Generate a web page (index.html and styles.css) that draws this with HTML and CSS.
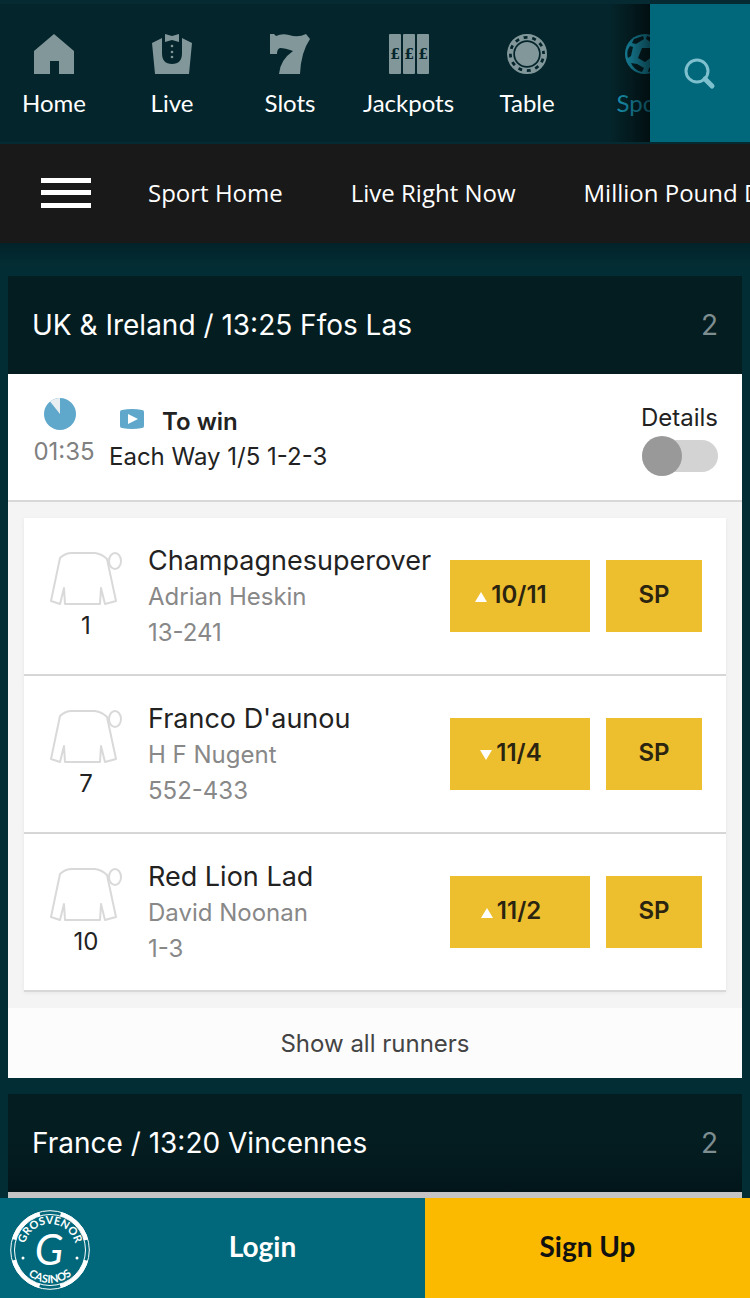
FILE: index.html
```
<!DOCTYPE html>
<html lang="en">

<head>
    <meta charset="UTF-8">
    <meta name="viewport" content="width=device-width, initial-scale=1.0">
    <title>Grosvenor Casinos - Sport</title>
    <link rel="stylesheet" href="styles.css">
</head>

<body>
    <header class="top">
        <nav class="products">
            <a href="#">
                <svg width="40" height="40" viewBox="0 0 40 40"><path d="M20 0L40 17V40H25V27H16V40H0V17Z"/></svg>
                Home
            </a>
            <a href="#">
                <svg width="40" height="40" viewBox="0 0 40 40">
                    <path d="M0 9L10 4V19Q10 30 20 30Q30 30 30 19V4L40 9L37 40H3Z"/>
                    <path d="M13 0L20 2L27 0V8L20 6L13 8Z"/>
                    <circle cx="20" cy="12" r="1.3"/><circle cx="20" cy="18" r="1.3"/><circle cx="20" cy="23" r="1.3"/>
                </svg>
                Live
            </a>
            <a href="#">
                <svg width="40" height="40" viewBox="0 0 40 40"><path d="M0 0H4L6 2Q12-1 19 1Q28 4 36 0L40 5Q31 18 30 40H9Q10 26 23 17Q15 14 10 14Q7 15 7 20H0Z"/></svg>
                Slots
            </a>
            <a href="#">
                <svg width="40" height="40" viewBox="0 0 40 40">
                    <rect width="12" height="40" rx="1"/><rect x="14" width="12" height="40" rx="1"/><rect x="28" width="12" height="40" rx="1"/>
                    <g class="pound"><text x="6" y="25">£</text><text x="20" y="25">£</text><text x="34" y="25">£</text></g>
                </svg>
                Jackpots
            </a>
            <a href="#">
                <svg width="40" height="40" viewBox="0 0 40 40">
                    <circle cx="20" cy="20" r="12"/>
                    <g fill="none" stroke="currentColor">
                        <circle cx="20" cy="20" r="19" stroke-width="2"/>
                        <circle cx="20" cy="20" r="14.5" stroke-width="1.5"/>
                        <circle cx="20" cy="20" r="17" stroke-width="5" stroke-dasharray="4.9 4"/>
                    </g>
                </svg>
                Table
            </a>
            <a href="#" class="current">
                <svg width="40" height="40" viewBox="0 0 40 40">
                    <circle cx="20" cy="20" r="20"/>
                    <path class="hole" d="M17 14L25 14L28 22L20 28L13 24ZM9 5L18 2L19 5L11 10L7 9ZM22 2L31 5L33 9L29 10L21 5ZM5 12L8 13L6 22L3 24Q1 17 5 12ZM6 29L12 30L19 34L17 38Q9 36 6 29ZM24 34L32 29L35 29Q31 37 23 38ZM35 12Q39 18 37 25L34 22L33 13Z"/>
                </svg>
                Sport
            </a>
        </nav>
        <button class="search" aria-label="Search">
            <svg width="32" height="32" viewBox="0 0 32 32" fill="none" stroke="#7fc0cf">
                <circle cx="13" cy="13" r="11" stroke-width="3"/>
                <path d="M21 21L28 28" stroke-width="5" stroke-linecap="round"/>
            </svg>
        </button>
    </header>

    <nav class="subnav">
        <button class="burger" aria-label="Menu"><span></span><span></span><span></span></button>
        <a href="#">Sport Home</a>
        <a href="#">Live Right Now</a>
        <a href="#">Million Pound Drop</a>
    </nav>

    <main>
        <section class="event">
            <h2>UK &amp; Ireland / 13:25 Ffos Las <span>2</span></h2>
            <div class="market">
                <div class="countdown">
                    <svg width="32" height="32" viewBox="0 0 32 32">
                        <circle cx="16" cy="16" r="16" fill="#5fa8cb"/>
                        <path d="M16 16V0A16 16 0 0 0 6 3.5Z" fill="#e9eef0"/>
                    </svg>
                    <span>01:35</span>
                </div>
                <div class="terms">
                    <strong>
                        <svg width="24" height="20" viewBox="0 0 24 20">
                            <path d="M2 1Q12-1 22 1Q24 1 24 3V17Q24 19 22 19Q12 21 2 19Q0 19 0 17V3Q0 1 2 1Z" fill="#5fa8cb"/>
                            <path d="M8 5L18 10L8 15Z" fill="#fff"/>
                        </svg>
                        To win
                    </strong>
                    <span>Each Way 1/5 1-2-3</span>
                </div>
                <label class="details" for="details">Details
                    <input type="checkbox" id="details">
                </label>
            </div>
            <div class="runners">
                <div class="runner">
                    <div class="silk">
                        <svg width="72" height="54" viewBox="0 0 72 54"><use href="#silk"/></svg>
                        <span>1</span>
                    </div>
                    <div class="info">
                        <h3>Champagnesuperover</h3>
                        <p>Adrian Heskin</p>
                        <p>13-241</p>
                    </div>
                    <button class="odds"><i class="up"></i>10/11</button>
                    <button class="sp">SP</button>
                </div>
                <div class="runner">
                    <div class="silk">
                        <svg width="72" height="54" viewBox="0 0 72 54"><use href="#silk"/></svg>
                        <span>7</span>
                    </div>
                    <div class="info">
                        <h3>Franco D'aunou</h3>
                        <p>H F Nugent</p>
                        <p>552-433</p>
                    </div>
                    <button class="odds"><i class="down"></i>11/4</button>
                    <button class="sp">SP</button>
                </div>
                <div class="runner">
                    <div class="silk">
                        <svg width="72" height="54" viewBox="0 0 72 54"><use href="#silk"/></svg>
                        <span>10</span>
                    </div>
                    <div class="info">
                        <h3>Red Lion Lad</h3>
                        <p>David Noonan</p>
                        <p>1-3</p>
                    </div>
                    <button class="odds"><i class="up"></i>11/2</button>
                    <button class="sp">SP</button>
                </div>
            </div>
            <button class="show-all">Show all runners</button>
        </section>

        <section class="event next">
            <h2>France / 13:20 Vincennes <span>2</span></h2>
        </section>
    </main>

    <footer class="account">
        <a href="#" class="logo" aria-label="Grosvenor Casinos">
            <svg width="80" height="80" viewBox="0 0 80 80">
                <circle cx="40" cy="40" r="39.3" fill="none" stroke="#fff"/>
                <circle cx="40" cy="40" r="35.5" fill="none" stroke="#fff"/>
                <circle cx="40" cy="40" r="37.5" fill="none" stroke="#fff" stroke-width="4" stroke-dasharray="37.9 21" stroke-dashoffset="-10.500"/>
                <path id="arcTop" d="M14 40A26 26 0 0 1 66 40" fill="none"/>
                <path id="arcBottom" d="M7 40A33 33 0 0 0 73 40" fill="none"/>
                <text class="ring"><textPath href="#arcTop" startOffset="50%">GROSVENOR</textPath></text>
                <text class="ring"><textPath href="#arcBottom" startOffset="50%">CASINOS</textPath></text>
                <circle cx="13" cy="48" r="1.5" fill="#fff"/><circle cx="67" cy="48" r="1.5" fill="#fff"/>
                <text class="mark" x="39" y="55">G</text>
            </svg>
        </a>
        <button class="login">Login</button>
        <button class="signup">Sign Up</button>
    </footer>

    <!-- jockey silk, shared by every runner -->
    <svg width="0" height="0" class="defs">
        <defs>
            <g id="silk" fill="none" stroke="#d9d9d9" stroke-width="2" stroke-linejoin="round">
                <path d="M10 6Q15 1 22 1H45Q52 2 57 7L66 49L55 52L51 36L50 52H15L14 36L10 52L1 49Z"/>
                <ellipse cx="65" cy="9" rx="6" ry="8"/>
            </g>
        </defs>
    </svg>
</body>

</html>
```

FILE: styles.css
```
* {
    box-sizing: border-box;
}

body {
    margin: 0;
    min-height: 100vh;
    display: flex;
    flex-direction: column;
    background: #032d34;
    font-family: Inter, "Open Sans", sans-serif;
    font-size: 24px;
    color: #222;
}

a {
    color: inherit;
    text-decoration: none;
}

button {
    border: none;
    padding: 0;
    font: inherit;
    color: inherit;
    cursor: pointer;
}

h2,
h3,
p {
    margin: 0;
    font-weight: 400;
}

.defs {
    position: absolute;
}

/* product navigation */
.top {
    display: flex;
    height: 144px;
    padding: 4px 0 2px;
    background: #052a31;
}

.products {
    flex: 1;
    min-width: 0;
    position: relative;
    display: flex;
    gap: 28px;
    padding: 30px 0 0 9px;
    overflow: hidden;
    background: #04252b;
    font-family: Lato, sans-serif;
    color: #fff;
}

.products::after {
    content: "";
    position: absolute;
    top: 0;
    right: 0;
    width: 40px;
    height: 100%;
    background: linear-gradient(to right, transparent, rgba(0, 0, 0, 0.6));
}

.products a {
    flex: 0 0 90px;
    display: flex;
    flex-direction: column;
    align-items: center;
    gap: 14px;
    line-height: 30px;
}

.products svg {
    fill: currentColor;
    color: #81979a;
}

.products .pound {
    fill: #04252b;
    font: bold 14px "DejaVu Serif", serif;
    text-anchor: middle;
}

.products .current,
.products .current svg {
    color: #1b9dbb;
}

.products .hole {
    fill: #04252b;
}

.search {
    width: 100px;
    padding-top: 8px;
    background: #00687a;
}

/* sport sub navigation */
.subnav {
    display: flex;
    align-items: center;
    height: 99px;
    padding: 0 0 2px 41px;
    overflow: hidden;
    white-space: nowrap;
    background: #191919;
    color: #fff;
    font-family: "Open Sans", sans-serif;
}

.subnav a {
    margin-right: 68px;
}

.burger {
    flex: none;
    display: flex;
    flex-direction: column;
    justify-content: space-between;
    width: 50px;
    height: 30px;
    margin-right: 57px;
    background: none;
}

.burger span {
    width: 100%;
    height: 5px;
    background: #fff;
}

main {
    flex: 1;
    display: flex;
    flex-direction: column;
    gap: 16px;
    padding: 33px 8px 0;
    background: linear-gradient(#02232a, #032d34 24px);
}

/* events */
.event h2 {
    display: flex;
    justify-content: space-between;
    padding: 0 24px;
    background: #041d21;
    color: #fff;
    font-size: 28px;
    line-height: 98px;
}

.event h2 span {
    color: #7d8d90;
}

.next {
    flex: 1;
    padding-bottom: 6px;
    background: #c4c4c4;
}

.next h2 {
    background: linear-gradient(#041d21 50%, #02161a);
}

.market {
    display: flex;
    height: 128px;
    padding: 24px 24px 0;
    background: #fff;
    border-bottom: 2px solid #d8d8d8;
}

.countdown {
    display: flex;
    flex-direction: column;
    align-items: center;
    gap: 6px;
    width: 64px;
    line-height: 32px;
    color: #808080;
}

.countdown svg {
    margin-right: 8px;
}

.terms {
    flex: 1;
    display: flex;
    flex-direction: column;
    padding: 6px 0 0 13px;
    line-height: 35px;
}

.terms strong {
    display: flex;
    align-items: center;
    gap: 18px;
    padding-left: 11px;
    font-weight: 600;
}

.terms svg {
    margin-bottom: 6px;
}

.details {
    display: flex;
    flex-direction: column;
    align-items: flex-end;
    gap: 6px;
    padding-top: 4px;
    line-height: 32px;
}

.details input {
    appearance: none;
    position: relative;
    width: 76px;
    height: 32px;
    margin: 0;
    border-radius: 16px;
    background: #d3d3d3;
}

.details input::before {
    content: "";
    position: absolute;
    top: -4px;
    left: 0;
    width: 40px;
    height: 40px;
    border-radius: 50%;
    background: #999;
}

.details input:checked::before {
    left: 36px;
}

.runners {
    padding: 16px;
    background: #f4f4f4;
}

.runner {
    display: flex;
    align-items: center;
    height: 158px;
    padding: 2px 24px 0;
    background: #fff;
    border-bottom: 2px solid #d8d8d8;
    box-shadow: 0 1px 4px rgba(0, 0, 0, 0.06);
}

.silk {
    width: 76px;
    padding-left: 2px;
    line-height: 32px;
}

.silk svg {
    display: block;
    margin-bottom: 4px;
}

.silk span {
    display: block;
    width: 72px;
    text-align: center;
}

.info {
    flex: 1;
    min-width: 0;
    margin: 0 15px 0 24px;
    overflow: hidden;
    white-space: nowrap;
    line-height: 36px;
    color: #888;
}

.info h3 {
    font-size: 27px;
    color: #222;
}

.odds,
.sp {
    flex: none;
    height: 72px;
    margin-bottom: 2px;
    padding-bottom: 4px;
    background: #edbf2e;
    color: #2b2410;
    font-weight: 600;
}

.odds {
    display: flex;
    align-items: center;
    justify-content: center;
    gap: 4px;
    width: 140px;
    padding-right: 18px;
    margin-right: 16px;
}

.sp {
    width: 96px;
}

.up,
.down {
    margin-top: 6px;
    border: 6px solid transparent;
}

.up {
    border-top: none;
    border-bottom: 10px solid #fff;
}

.down {
    border-bottom: none;
    border-top: 10px solid #fff;
}

.show-all {
    display: block;
    width: 100%;
    height: 70px;
    background: #fcfcfc;
    color: #444;
}

/* account bar */
.account {
    position: sticky;
    bottom: 0;
    display: grid;
    grid-template-columns: 100px 1fr 1fr;
    height: 100px;
    background: #00687a;
    color: #fff;
    font-family: Lato, sans-serif;
    font-size: 28px;
    font-weight: 700;
}

.logo {
    padding: 12px 0 0 10px;
}

.ring {
    fill: #fff;
    font: 700 11px Lato, sans-serif;
    text-anchor: middle;
}

.mark {
    fill: #fff;
    font: italic 400 42px Lato, sans-serif;
    text-anchor: middle;
}

.login,
.signup {
    padding-bottom: 4px;
}

.login {
    background: #00687a;
}

.signup {
    background: #fbba00;
    color: #111;
}
```
